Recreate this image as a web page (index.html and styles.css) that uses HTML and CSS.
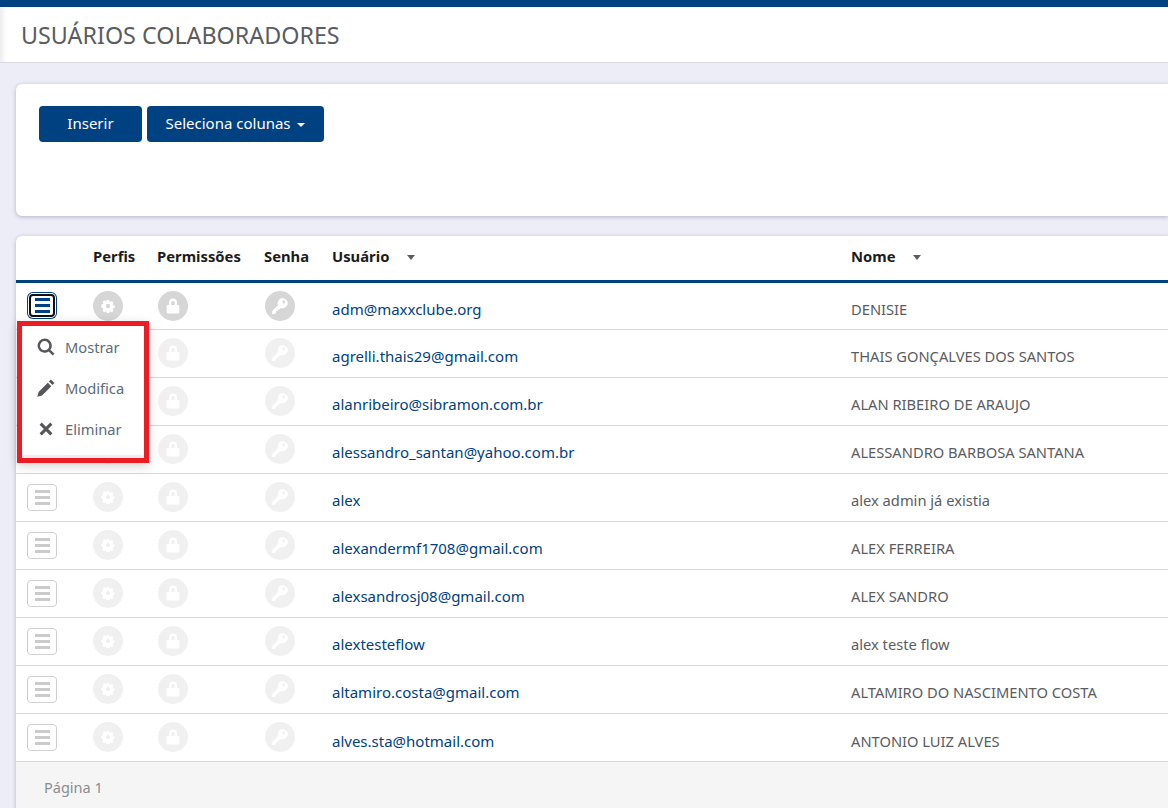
FILE: index.html
```html
<!DOCTYPE html>
<html lang="pt">
  <head>
    <meta charset="UTF-8" />
    <title>Usuários colaboradores</title>
    <link rel="stylesheet" href="styles.css">
  </head>
  <body>
    <svg class="icon-defs" width="0" height="0">
      <symbol id="i-gear" viewBox="0 0 16 16">
        <path fill-rule="evenodd" d="M6.700 1h2.600l.4 1.900 1.100.5 1.700-1 1.800 1.900-1 1.600.5 1.200 1.900.4v2.600l-1.900.4-.5 1.200 1 1.600-1.800 1.900-1.700-1-1.100.5-.4 1.900H6.700l-.4-1.900-1.100-.5-1.700 1-1.800-1.900 1-1.600-.5-1.200L.3 9.100V6.500l1.900-.4.5-1.200-1-1.600 1.800-1.900 1.700 1 1.100-.5zM8 5.500a2.500 2.500 0 1 0 0 5 2.500 2.500 0 0 0 0-5z" />
      </symbol>
      <symbol id="i-lock" viewBox="-0.5 -0.5 17 17">
        <path fill-rule="evenodd" d="M4.200 7V4.800a3.800 3.800 0 0 1 7.600 0V7h1a1.200 1.200 0 0 1 1.200 1.200v5.600a1.200 1.200 0 0 1-1.200 1.200H3.200A1.200 1.200 0 0 1 2 13.800V8.200A1.200 1.200 0 0 1 3.200 7zm2.200 0h3.200V4.800a1.600 1.600 0 0 0-3.200 0z" />
      </symbol>
      <symbol id="i-key" viewBox="0 0 16 16">
        <path fill-rule="evenodd" d="M10.500 1a4.500 4.500 0 1 1-1.700 8.700L7.500 11H6v1.500H4.500V14l-1 1H1v-2.500l5.300-5.300A4.500 4.500 0 0 1 10.500 1zm1 2.200a1.300 1.300 0 1 0 0 2.600 1.300 1.300 0 0 0 0-2.600z" />
      </symbol>
      <symbol id="i-search" viewBox="0 0 16 16">
        <path fill-rule="evenodd" d="M6.800.5a6.300 6.300 0 0 1 5.100 10l3.600 3.600-1.500 1.500-3.600-3.600A6.300 6.300 0 1 1 6.800.5zm0 2.200a4.100 4.100 0 1 0 0 8.200 4.100 4.100 0 0 0 0-8.200z" />
      </symbol>
      <symbol id="i-pencil" viewBox="0 0 16 16">
        <path d="M12.400.5l3.100 3.100-1.800 1.800-3.100-3.100zM9.600 3.300l3.100 3.100-8.200 8.200-4.200 1.100 1.100-4.200z" />
      </symbol>
      <symbol id="i-times" viewBox="0 0 16 16">
        <path d="M4.200 2.300L8 6.100l3.800-3.800 1.900 1.900L9.900 8l3.800 3.800-1.900 1.900L8 9.900l-3.800 3.800-1.900-1.900L6.100 8 2.300 4.200z" />
      </symbol>
    </svg>

    <div class="topbar"></div>
    <div class="page-head">
      <h1>USUÁRIOS COLABORADORES</h1>
    </div>

    <div class="content">
      <div class="card toolbar">
        <button class="btn btn-insert">Inserir</button>
        <button class="btn btn-cols">Seleciona colunas <span class="caret"></span></button>
      </div>

      <div class="card list">
        <table>
          <thead>
            <tr>
              <th class="c-menu"></th>
              <th class="c-perfis">Perfis</th>
              <th class="c-perm">Permissões</th>
              <th class="c-senha">Senha</th>
              <th class="c-user">Usuário <span class="sort"></span></th>
              <th>Nome <span class="sort"></span></th>
            </tr>
          </thead>
          <tbody>
            <tr class="active">
              <td><div class="menu-btn open"><span></span><span></span><span></span></div></td>
              <td><div class="round gear"><svg><use href="#i-gear" /></svg></div></td>
              <td><div class="round shift"><svg><use href="#i-lock" /></svg></div></td>
              <td><div class="round shift"><svg><use href="#i-key" /></svg></div></td>
              <td class="link">adm@maxxclube.org</td>
              <td class="name">DENISIE</td>
            </tr>
            <tr>
              <td><div class="menu-btn"><span></span><span></span><span></span></div></td>
              <td><div class="round gear"><svg><use href="#i-gear" /></svg></div></td>
              <td><div class="round shift"><svg><use href="#i-lock" /></svg></div></td>
              <td><div class="round shift"><svg><use href="#i-key" /></svg></div></td>
              <td class="link">agrelli.thais29@gmail.com</td>
              <td class="name">THAIS GONÇALVES DOS SANTOS</td>
            </tr>
            <tr>
              <td><div class="menu-btn"><span></span><span></span><span></span></div></td>
              <td><div class="round gear"><svg><use href="#i-gear" /></svg></div></td>
              <td><div class="round shift"><svg><use href="#i-lock" /></svg></div></td>
              <td><div class="round shift"><svg><use href="#i-key" /></svg></div></td>
              <td class="link">alanribeiro@sibramon.com.br</td>
              <td class="name">ALAN RIBEIRO DE ARAUJO</td>
            </tr>
            <tr>
              <td><div class="menu-btn"><span></span><span></span><span></span></div></td>
              <td><div class="round gear"><svg><use href="#i-gear" /></svg></div></td>
              <td><div class="round shift"><svg><use href="#i-lock" /></svg></div></td>
              <td><div class="round shift"><svg><use href="#i-key" /></svg></div></td>
              <td class="link">alessandro_santan@yahoo.com.br</td>
              <td class="name">ALESSANDRO BARBOSA SANTANA</td>
            </tr>
            <tr>
              <td><div class="menu-btn"><span></span><span></span><span></span></div></td>
              <td><div class="round gear"><svg><use href="#i-gear" /></svg></div></td>
              <td><div class="round shift"><svg><use href="#i-lock" /></svg></div></td>
              <td><div class="round shift"><svg><use href="#i-key" /></svg></div></td>
              <td class="link">alex</td>
              <td class="name">alex admin já existia</td>
            </tr>
            <tr>
              <td><div class="menu-btn"><span></span><span></span><span></span></div></td>
              <td><div class="round gear"><svg><use href="#i-gear" /></svg></div></td>
              <td><div class="round shift"><svg><use href="#i-lock" /></svg></div></td>
              <td><div class="round shift"><svg><use href="#i-key" /></svg></div></td>
              <td class="link">alexandermf1708@gmail.com</td>
              <td class="name">ALEX FERREIRA</td>
            </tr>
            <tr>
              <td><div class="menu-btn"><span></span><span></span><span></span></div></td>
              <td><div class="round gear"><svg><use href="#i-gear" /></svg></div></td>
              <td><div class="round shift"><svg><use href="#i-lock" /></svg></div></td>
              <td><div class="round shift"><svg><use href="#i-key" /></svg></div></td>
              <td class="link">alexsandrosj08@gmail.com</td>
              <td class="name">ALEX SANDRO</td>
            </tr>
            <tr>
              <td><div class="menu-btn"><span></span><span></span><span></span></div></td>
              <td><div class="round gear"><svg><use href="#i-gear" /></svg></div></td>
              <td><div class="round shift"><svg><use href="#i-lock" /></svg></div></td>
              <td><div class="round shift"><svg><use href="#i-key" /></svg></div></td>
              <td class="link">alextesteflow</td>
              <td class="name">alex teste flow</td>
            </tr>
            <tr>
              <td><div class="menu-btn"><span></span><span></span><span></span></div></td>
              <td><div class="round gear"><svg><use href="#i-gear" /></svg></div></td>
              <td><div class="round shift"><svg><use href="#i-lock" /></svg></div></td>
              <td><div class="round shift"><svg><use href="#i-key" /></svg></div></td>
              <td class="link">altamiro.costa@gmail.com</td>
              <td class="name">ALTAMIRO DO NASCIMENTO COSTA</td>
            </tr>
            <tr class="last">
              <td><div class="menu-btn"><span></span><span></span><span></span></div></td>
              <td><div class="round gear"><svg><use href="#i-gear" /></svg></div></td>
              <td><div class="round shift"><svg><use href="#i-lock" /></svg></div></td>
              <td><div class="round shift"><svg><use href="#i-key" /></svg></div></td>
              <td class="link">alves.sta@hotmail.com</td>
              <td class="name">ANTONIO LUIZ ALVES</td>
            </tr>
          </tbody>
        </table>
        <div class="pager">Página 1</div>

        <div class="row-menu">
          <a><svg><use href="#i-search" /></svg>Mostrar</a>
          <a><svg><use href="#i-pencil" /></svg>Modifica</a>
          <a><svg><use href="#i-times" /></svg>Eliminar</a>
        </div>
      </div>
    </div>
  </body>
</html>
```

FILE: styles.css
```css
* {
  box-sizing: border-box;
}
html,
body {
  height: 100%;
}
body {
  margin: 0;
  overflow: hidden;
  background: #ecedf7;
  font-family: "Noto Sans", "Liberation Sans", sans-serif;
  font-size: 14.500px;
  color: #5a5c5f;
}
.icon-defs {
  position: absolute;
}
.topbar {
  height: 7px;
  background: #004182;
}
.page-head {
  height: 56px;
  padding: 12px 0 0 21px;
  background: #fff;
  border-bottom: 1px solid #d9d9e2;
  box-shadow: inset 7px 0 6px -5px rgba(0, 0, 0, 0.1);
}
h1 {
  margin: 0;
  font-size: 23.300px;
  line-height: 32px;
  font-weight: 400;
  color: #5a5c5f;
}
.content {
  margin-left: 16px;
  padding-top: 21px;
}
.card {
  background: #fff;
  border-radius: 6px 0 0 6px;
  box-shadow: 0 1px 4px rgba(60, 60, 80, 0.32);
}
.toolbar {
  display: flex;
  align-items: flex-start;
  gap: 5px;
  height: 132px;
  padding: 22px 23px;
}
.btn {
  height: 36px;
  padding: 0 0 2px;
  border: 0;
  border-radius: 4px;
  background: #004182;
  color: #fff;
  font-family: inherit;
  font-size: 15px;
}
.btn-insert {
  width: 103px;
}
.btn-cols {
  width: 177px;
}
.caret {
  display: inline-block;
  margin-left: 3px;
  vertical-align: middle;
  border-top: 4px solid #fff;
  border-left: 4px solid transparent;
  border-right: 4px solid transparent;
}
.list {
  position: relative;
  margin-top: 20px;
  border-radius: 6px 0 0 0;
}
table {
  width: 100%;
  border-collapse: separate;
  border-spacing: 0;
  table-layout: fixed;
}
th {
  height: 47px;
  padding: 0 0 4px;
  text-align: left;
  font-size: 14.800px;
  font-weight: 700;
  color: #1c1c1c;
  border-bottom: 3px solid #004182;
}
td {
  height: 48px;
  padding: 8px 0 0;
  vertical-align: top;
  border-bottom: 1px solid #d8d8d8;
}
tr.active td {
  height: 47px;
}
.c-menu {
  width: 77px;
}
.c-perfis {
  width: 64px;
}
.c-perm {
  width: 107px;
}
.c-senha {
  width: 68px;
}
.c-user {
  width: 519px;
}
.sort {
  display: inline-block;
  margin-left: 14px;
  vertical-align: middle;
  border-top: 5px solid #5a5c5f;
  border-left: 4.500px solid transparent;
  border-right: 4.500px solid transparent;
}
.menu-btn {
  display: flex;
  flex-direction: column;
  justify-content: center;
  align-items: center;
  gap: 3px;
  width: 30px;
  height: 27px;
  margin: 2px 0 0 11px;
  border: 1px solid #cfcfcf;
  border-radius: 4px;
  background: #fff;
}
.menu-btn span {
  width: 15px;
  height: 3px;
  background: #cbcbcb;
}
.menu-btn.open {
  width: 26px;
  height: 23px;
  margin: 3px 0 0 13px;
  border: 2px solid #111;
  box-shadow: 0 0 0 1px #fff, 0 0 0 2px #004182;
}
.menu-btn.open span {
  background: #004182;
}
.round {
  display: flex;
  align-items: center;
  justify-content: center;
  width: 30px;
  height: 30px;
  border-radius: 50%;
  background: #f0f0f0;
}
.round.shift {
  margin-left: 1px;
}
.round svg {
  width: 18px;
  height: 18px;
  fill: #fff;
}
.round.gear svg {
  width: 14px;
  height: 14px;
}
.active .round {
  background: #d6d6d6;
}
.link,
.name {
  padding-top: 16px;
  line-height: 20px;
}
.last .link,
.last .name {
  padding-top: 17px;
}
.link {
  font-size: 15px;
  color: #004182;
}
.name {
  font-size: 14.700px;
}
.pager {
  height: 60px;
  padding: 15px 0 0 28px;
  background: #f5f5f5;
  color: #8a8d91;
}
.row-menu {
  position: absolute;
  left: 1px;
  top: 85px;
  width: 132px;
  height: 142px;
  border: 5px solid #ed1c24;
  background: #fff;
  box-shadow: 0 3px 10px rgba(0, 0, 0, 0.18);
}
.row-menu::after {
  content: "";
  position: absolute;
  left: 0;
  right: 0;
  bottom: 0;
  height: 3px;
  background: #eeeeee;
}
.row-menu a {
  display: flex;
  align-items: center;
  height: 41px;
  padding-left: 15px;
  font-size: 14.700px;
  color: #5b6b7b;
}
.row-menu svg {
  width: 18px;
  height: 18px;
  margin-right: 10px;
  fill: #54565a;
}
```
